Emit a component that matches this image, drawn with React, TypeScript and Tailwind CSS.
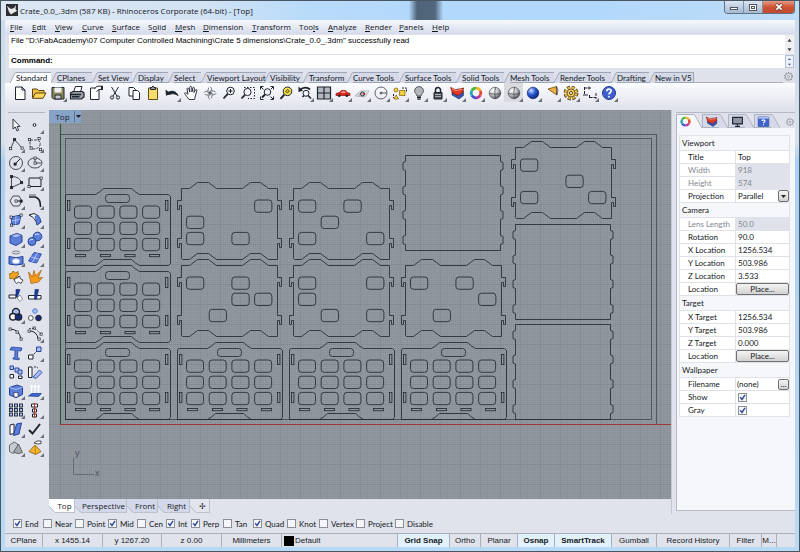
import type { ReactNode } from "react";

const INK = "#1d2430";

type Tool = { name: string; fly?: boolean; active?: boolean; art: ReactNode };

function Icon({ children }: { children: ReactNode }) {
  return (
    <svg viewBox="0 0 16 16" className="h-4 w-4 shrink-0" fill="none" stroke={INK} strokeWidth="1" aria-hidden="true">
      {children}
    </svg>
  );
}

function ToolButton({ tool }: { tool: Tool }) {
  return (
    <button
      type="button"
      aria-label={tool.name}
      className={`relative flex h-[19px] w-[19px] shrink-0 items-center justify-center ${tool.active ? "bg-[#d9dbdf]" : ""}`}
    >
      <Icon>{tool.art}</Icon>
      {tool.fly && (
        <svg viewBox="0 0 4 4" className="absolute right-0 bottom-0 h-1 w-1" aria-hidden="true">
          <path d="M4 0V4H0Z" fill="#6b6f76" />
        </svg>
      )}
    </button>
  );
}

const sphere = (light: string, mid: string, dark: string, id: string) => (
  <>
    <defs>
      <radialGradient id={id} cx="0.35" cy="0.3" r="0.75">
        <stop offset="0" stopColor={light} />
        <stop offset="0.5" stopColor={mid} />
        <stop offset="1" stopColor={dark} />
      </radialGradient>
    </defs>
    <circle cx="8" cy="8" r="5.8" fill={`url(#${id})`} stroke={dark} strokeWidth="0.6" />
  </>
);

const magnifier = (
  <>
    <circle cx="9.5" cy="6" r="3.8" fill="#f4f6fa" />
    <path d="M6.8 8.8L2.5 13.5" strokeWidth="1.8" />
  </>
);

const colorWheel = (
  <g strokeWidth="2.8">
    <path d="M8 3.2A4.8 4.8 0 0 1 12.2 5.6" stroke="#f0b429" />
    <path d="M12.2 5.6A4.8 4.8 0 0 1 12.2 10.4" stroke="#e8452c" />
    <path d="M12.2 10.4A4.8 4.8 0 0 1 8 12.8" stroke="#c0359b" />
    <path d="M8 12.8A4.8 4.8 0 0 1 3.8 10.4" stroke="#3b55cf" />
    <path d="M3.8 10.4A4.8 4.8 0 0 1 3.8 5.6" stroke="#27a5b8" />
    <path d="M3.8 5.6A4.8 4.8 0 0 1 8 3.2" stroke="#4cb542" />
  </g>
);

const layers = (
  <>
    <path d="M3 7V10L10 14L14.5 10.5V6L9 4Z" fill="#3756b4" stroke="#1b2d6b" strokeWidth="0.6" />
    <path d="M1.5 2.5L7 4.8L14.5 3L13.8 7.5L9 10.5L3.5 8Z" fill="#e23b22" stroke="#7b1b10" strokeWidth="0.7" />
    <path d="M3 3.5L7 5.5L13 4.3" stroke="#f79b83" />
  </>
);

const gear = (
  <>
    <circle cx="8" cy="8" r="5.8" strokeWidth="1.6" strokeDasharray="1.6 2.1" />
    <circle cx="8" cy="8" r="4.8" />
    <circle cx="8" cy="8" r="1.6" />
  </>
);

const mainTools: Tool[] = [
  { name: "New", art: <path d="M3.5 2H10L13 5V14.5H3.5ZM10 2V5H13" fill="#fff" /> },
  {
    name: "Open",
    art: (
      <>
        <path d="M1.5 13V4H6L7.5 5.5H13V8" fill="#f3c13c" stroke="#5c4410" />
        <path d="M1.5 13.3L4.5 8H15L12 13.3Z" fill="#ffd65c" stroke="#5c4410" />
      </>
    ),
  },
  {
    name: "Save",
    fly: true,
    art: (
      <>
        <path d="M2 2.5H14V14H3.5L2 12.5Z" fill="#8b8a58" />
        <path d="M4.5 2.5H11.5V7.5H4.5Z" fill="#eef0f2" stroke="none" />
        <path d="M5 10H11V14H5Z" fill="#c9ccd0" />
      </>
    ),
  },
  {
    name: "Print",
    art: (
      <>
        <path d="M4.5 7L6.5 1.5H13L11.5 7" fill="#fff" />
        <path d="M1.5 8L4 6.5H13.5L15 8V12L12.5 14H1.5Z" fill="#9b9da2" strokeWidth="1.2" />
        <path d="M1.5 9.5H12M3 11.8H10.5" strokeWidth="1.4" />
      </>
    ),
  },
  {
    name: "Document properties",
    art: (
      <>
        <path d="M2.5 3H11V14.5H2.5Z" fill="#fff" />
        <path d="M6.5 4L9 1.2H14.5V4.5H11L8.5 6.5" fill="#fff" />
        <path d="M14 1V5" strokeWidth="2" />
      </>
    ),
  },
  { name: "Cut", art: <><path d="M4.5 2L10 11M11.5 2L6 11" /><circle cx="5" cy="12.5" r="1.6" /><circle cx="11" cy="12.5" r="1.6" /></> },
  { name: "Copy", art: <><path d="M3 2.5H7.5L9.5 4.5V11H3Z" fill="#fff" /><path d="M7 5.5H11.5L13.5 7.5V14.5H7Z" fill="#fff" /></> },
  { name: "Paste", art: <><path d="M3.5 3H12.5V14.5H3.5Z" fill="#f7dd6c" stroke="#5d4c13" /><path d="M5.5 4.5V2.5H7L8 1L9 2.5H10.5V4.5Z" fill="#9ea3aa" /></> },
  { name: "Undo", fly: true, art: <><path d="M4 7.5C7 5.5 12 5.5 14 10.5C10.5 8 7.5 8.5 5 9.5Z" fill={INK} /><path d="M1.5 4.5L2 10.8L7 8.8Z" fill={INK} stroke="none" /></> },
  { name: "Pan", art: <path d="M6 14.5C4.5 12.5 2.5 10 1.5 8.3C2.5 7 4 8.2 5 9.3L4 3.6C4.5 2.5 5.6 3 6 4L6.8 7L6.7 2.2C7 1 8.4 1 8.7 2.2L9 7L9.8 2.8C10.5 1.8 11.5 2.4 11.4 3.6L11 7.5L12.5 4.8C13.5 4.2 14.2 5 13.8 6L12.3 11L11.5 14.5Z" fill="#fff" strokeWidth="0.9" /> },
  { name: "Rotate view", art: <g stroke="#6a707a" strokeWidth="0.9"><ellipse cx="8" cy="8" rx="6.3" ry="2.2" strokeDasharray="5 2" /><ellipse cx="8" cy="8" rx="2.2" ry="6.3" strokeDasharray="5 2" /><path d="M8 6V10M6 8H10" stroke={INK} /></g> },
  { name: "Zoom dynamic", art: <>{magnifier}<path d="M9.5 4V8M7.5 6H11.5" /></> },
  { name: "Zoom window", art: <><path d="M4 2.5H14.5V13.5H8" strokeDasharray="1.5 1.5" /><circle cx="7.5" cy="7" r="3.6" fill="#f4f6fa" /><path d="M5 9.8L1.5 13.5" strokeWidth="1.8" /></> },
  { name: "Zoom extents", art: <><circle cx="8.5" cy="7" r="3.3" /><path d="M6 9.5L3 12.5" strokeWidth="1.8" /><path d="M1.5 4.5V1.5H4.5M11.5 1.5H14.5V4.5M14.5 11.5V14.5H11.5M4.5 14.5H1.5V11.5M12 4L14 2M11.5 11.5L14 14M2 2L4.5 4.5" /></> },
  { name: "Zoom selected", art: <><circle cx="9.5" cy="6.3" r="4.3" fill="#f5e04a" /><path d="M7.5 6.5L9.5 4.5L11.5 6L9.5 8Z" fill="#e3b81f" strokeWidth="0.7" /><path d="M6.3 9.6L2.5 13.8" strokeWidth="2" /></> },
  { name: "Undo view", fly: true, art: <><path d="M3 5C6 2 10.5 2 13 4.5" strokeWidth="1.8" /><path d="M1.5 1.5V7L6 5.8Z" fill={INK} stroke="none" /><circle cx="9" cy="8.3" r="3" /><path d="M11 10.5L14 13.5M5.5 12L7 10.5" strokeWidth="1.6" /></> },
  { name: "Four viewports", fly: true, art: <><path d="M1.5 2H14.5V14H1.5Z" fill="#b4b8be" strokeWidth="1.2" /><path d="M8 2V14M1.5 8H14.5" strokeWidth="1.2" /></> },
  { name: "Set view", fly: true, art: <><path d="M1 8.5L4.5 7.5L6.5 5.5H10.5L12 7.5L15 8.5V10.5H1Z" fill="#e22518" stroke="#8c120b" strokeWidth="0.7" /><path d="M7 6.5H10L10.8 7.8H6Z" fill="#f6cdc8" stroke="none" /><circle cx="4.3" cy="10.7" r="1.3" fill={INK} stroke="none" /><circle cx="11.8" cy="10.7" r="1.3" fill={INK} stroke="none" /></> },
  { name: "Set construction plane", fly: true, art: <><path d="M1 11L6 6H15L11 12ZM4 8.5H13M2.5 10H12M8 6L5 11.5M11.5 6L8 12" stroke="#9299a6" strokeWidth="0.6" /><circle cx="8.5" cy="9" r="2" stroke="#333" /><path d="M8.5 9H11" stroke="#d12c22" strokeWidth="1.2" /></> },
  { name: "Object snap", fly: true, art: <g stroke="#5d636d"><circle cx="8" cy="8" r="6" /><path d="M8 8H14" /><circle cx="8" cy="8" r="1" fill="#5d636d" /></g> },
  { name: "Select", fly: true, art: <><g fill="#f7cf3a" stroke="#7d5c10" strokeWidth="0.7"><path d="M7.5 5.5H13V10.5H7.5Z" /><circle cx="4" cy="5" r="2" /><path d="M2 14L4.2 10L6.5 14Z" /></g><path d="M10 3H14.5V7M1.5 9V13" strokeDasharray="2 1" /></> },
  { name: "Hide", fly: true, art: <><path d="M6 11C6 9 3.6 8.5 3.6 5.8A4.4 4.2 0 0 1 12.4 5.8C12.4 8.5 10 9 10 11Z" fill="#b3b6bb" stroke="#55585e" /><path d="M6 12.2H10M6.5 14H9.5" strokeWidth="1.4" /></> },
  { name: "Lock", fly: true, art: <><path d="M5.5 7.5V5A2.5 2.5 0 0 1 10.5 5V7.5" strokeWidth="1.5" /><path d="M4 7.5H12V14H4Z" fill="#4b4e55" /><path d="M5 9.5H11M5 11.5H11" stroke="#a9adb5" /></> },
  { name: "Layers", fly: true, art: layers },
  { name: "Colors", fly: true, art: colorWheel },
  { name: "Shade", art: <>{sphere("#ffffff", "#c3c5c9", "#4a4c51", "sg1")}<path d="M2.2 8.5Q8 10 13.8 8.5M8.5 2.2Q7 8 8.5 13.8" stroke="#3b3d42" strokeWidth="0.7" /></> },
  { name: "Shaded viewport", fly: true, active: true, art: <>{sphere("#ffffff", "#c3c5c9", "#4a4c51", "sg2")}<path d="M2.2 8.5Q8 10 13.8 8.5M8.5 2.2Q7 8 8.5 13.8" stroke="#3b3d42" strokeWidth="0.7" /></> },
  { name: "Render", fly: true, art: sphere("#cfe0ff", "#2654cf", "#0a1f6d", "sg3") },
  { name: "Spotlight", fly: true, art: <><path d="M4 4L12.5 1.5L12.8 10Z" fill="#f0b040" stroke="#6b4a12" strokeWidth="0.8" /><path d="M12.5 1.5L14 5L12.8 10Z" fill="#fff3c8" strokeWidth="0.6" /></> },
  { name: "Options", fly: true, art: <><circle cx="8" cy="8" r="5.8" stroke="#4d3a0e" strokeWidth="3.2" strokeDasharray="3 1.55" /><circle cx="8" cy="8" r="5.4" stroke="#e5b53a" strokeWidth="2.4" strokeDasharray="2.2 2.04" strokeDashoffset="-0.3" /><circle cx="8" cy="8" r="4" fill="#efcb62" stroke="#5e4611" strokeWidth="0.8" /><circle cx="8" cy="8" r="1.5" fill="#fff" stroke="#5e4611" /></> },
  { name: "Dimension", fly: true, art: <><path d="M2.5 2V10M2.5 3H9M7 1.5V4.5M7.5 10V14M14 8V14M7.5 12.5H14" strokeDasharray="3 1" /><path d="M1 10H6" /></> },
  { name: "Help", fly: true, art: <><circle cx="8" cy="8" r="6.5" fill="#3f5fcc" stroke="#233c94" /><path d="M5.8 6.2C5.8 3.4 10.4 3.6 10.2 6C10.1 7.5 8 7.6 8 9.5M8 11V12.6" stroke="#fff" strokeWidth="1.7" /></> },
];

const BLUE = "#5b7fd8";
const PALE = "#a9bff2";
const node = (x: number, y: number, fill = "#fff") => (
  <rect key={`${x}-${y}`} x={x - 1} y={y - 1} width="2.2" height="2.2" fill={fill} strokeWidth="0.7" />
);

const sideTools: Tool[] = [
  { name: "Cancel", art: <path d="M5 2V12L7.3 10L9 14L10.6 13.2L9 9.5H12Z" fill="#fff" strokeWidth="0.9" /> },
  { name: "Point", fly: true, art: <circle cx="7.5" cy="8" r="1.4" fill="#fff" /> },
  { name: "Polyline", fly: true, art: <><path d="M3 12L6.5 3.5L14 12" strokeWidth="0.8" />{node(2.5, 12.5)}{node(6.5, 3.5, INK)}{node(14, 12)}</> },
  { name: "Curve", fly: true, art: <><path d="M3 4H10Q14 5 13 9Q12 13 6 13Q3 12 3 9Z" strokeDasharray="3 1" strokeWidth="0.8" />{[[2.5, 3.5], [12, 2.5], [13.5, 13.5], [4, 12]].map(([x, y]) => node(x, y))}</> },
  { name: "Circle", fly: true, art: <><circle cx="8" cy="8" r="6.5" strokeWidth="0.8" /><path d="M7 9L12 4" />{node(7, 9, INK)}</> },
  { name: "Ellipse", fly: true, art: <><ellipse cx="8" cy="8" rx="7" ry="5" strokeWidth="0.8" /><path d="M8 3V8H14" strokeWidth="0.8" />{node(8, 8)}{node(8, 3)}</> },
  { name: "Arc", fly: true, art: <><path d="M3.5 2.5Q12 2.5 13.5 9L3.5 13.5Z" strokeWidth="0.8" />{node(3.5, 2.5, INK)}{node(13.5, 8.5, INK)}{node(3.5, 13.5, INK)}</> },
  { name: "Rectangle", fly: true, art: <><path d="M2 4H14V12.5H2Z" />{node(2, 12.5)}{node(14, 4)}</> },
  { name: "Polygon", fly: true, art: <><path d="M2 8L5 3H11L14 8L11 13H5Z" strokeWidth="0.8" /><path d="M8 8H13" />{node(8, 8)}{node(13, 8, INK)}</> },
  { name: "Fillet", fly: true, art: <><path d="M2 4H8Q13.5 5 13.5 14" strokeWidth="1.6" /><path d="M2 2H9" strokeWidth="0.7" /></> },
  { name: "Surface from points", fly: true, art: <><path d="M3 5L13 3L11 12L4 13Z" fill={BLUE} stroke="#26429a" /><path d="M8 4L7.5 12.5M3.5 9L12 7.5" stroke="#c8d6fa" strokeWidth="0.7" />{node(3, 5)}{node(13, 3)}{node(3.5, 13)}</> },
  { name: "Sweep", fly: true, art: <><path d="M2 3L7 1.5Q13 4 14 10L10 13Q9 6 2 3Z" fill="#f4f6ff" /><path d="M8 4.5L11 3Q13.5 6 13.8 10L10 13Q9.8 8 8 4.5Z" fill={BLUE} stroke="#3755b5" strokeWidth="0.8" /></> },
  { name: "Box", fly: true, art: <><path d="M2 5L9 2.5L14 4.5V11L8 14.5L2 12Z" fill={BLUE} stroke="#26429a" /><path d="M2 5L8 7L14 4.5L9 2.5Z" fill={PALE} stroke="#26429a" strokeWidth="0.6" /></> },
  { name: "Spheres", fly: true, art: <><circle cx="10.5" cy="5.5" r="4.3" fill={BLUE} stroke="#26429a" /><circle cx="5" cy="10.5" r="4" fill={BLUE} stroke="#26429a" /><path d="M8 4Q10 2 12 3.5M2.5 9.5Q4 7.5 6 8.5" stroke="#dfe8ff" /></> },
  { name: "Surface tools", fly: true, art: <><ellipse cx="8" cy="2.5" rx="4" ry="1.4" stroke="#777d88" /><path d="M1 6.5Q8 9 15 6.5V14Q8 16 1 14Z" fill={BLUE} stroke="#26429a" /><ellipse cx="8" cy="11.2" rx="3.6" ry="2.6" fill="#fff" stroke={PALE} /></> },
  { name: "Patch", fly: true, art: <><path d="M1.5 11L7 2.5L14.5 4L9.5 13Z" fill={BLUE} stroke="#3755b5" /><path d="M4 7L12 9M10.5 3L5.5 12" stroke="#dbe4fc" strokeWidth="0.7" /></> },
  { name: "Puzzle", art: <><path d="M1.5 4.5H4Q4 1.5 6 2.5L7.5 4L10 2.5L10.5 6L8.5 7.5L10 10L6 11L5 9L2 10Z" fill="#f2a21b" stroke="#8b570a" strokeWidth="0.7" /><path d="M7 9H10V7.5H12V9.5L15 11L13 14.5L10.5 13L8.5 14.5L6.5 12Z" fill="#fff" strokeWidth="0.8" /></> },
  { name: "Explode", art: <path d="M1.5 3L5.5 8L7 1.5L8.5 7L14.5 1L11 9L15.5 8.5L11.5 13L4 14.5Z" fill="#f59a17" stroke="#a35b08" strokeWidth="0.7" /> },
  { name: "Trim", art: <><path d="M1 7H8V10H1Z" fill="#fff" /><path d="M8 1.5H12L9.5 9H8Z" fill="#1c3f9e" stroke="#10276b" strokeWidth="0.6" /><path d="M9 10L12 7L14.5 11L12 13.5Z" fill="#fff" stroke="#8b8f97" /></> },
  { name: "Split", art: <><path d="M1.5 7.5H14V11H1.5Z" fill="#fff" /><path d="M8 1.5H11.5L9.5 11H7.5Z" fill="#1c3f9e" stroke="#10276b" strokeWidth="0.6" /></> },
  { name: "Group", fly: true, art: <><circle cx="8" cy="5" r="3.5" fill={PALE} strokeWidth="1.3" /><circle cx="5" cy="9.8" r="3.3" fill="#fff" strokeWidth="1.5" /><circle cx="10.5" cy="10" r="3.2" fill="#1b2a78" strokeWidth="1.3" /></> },
  { name: "Ungroup", art: <><circle cx="8" cy="4" r="2.3" fill={PALE} stroke={BLUE} /><circle cx="3.8" cy="11" r="2.4" fill="#fff" stroke="#555" /><circle cx="11.5" cy="11" r="2.8" fill="#1b2a78" /></> },
  { name: "Edit points", art: <><path d="M2 3Q12 3.5 13 14" />{node(2, 3)}{node(9, 6)}{node(13, 13)}</> },
  { name: "Control points", fly: true, art: <><path d="M1 5Q10 4 11.5 14" />{node(2, 5)}{node(7, 2)}{node(14, 8)}{node(12, 13)}<path d="M2 2.5H8L14 8" strokeDasharray="2 1" strokeWidth="0.7" /></> },
  { name: "Text", art: <path d="M2 5L3.5 2L14 3L13 6L9.8 5.5L9.5 12.5L11.5 13.5L11 14.8L5 14L5.2 12.8L6.8 12.5L7 5.2L4 5Z" fill={BLUE} stroke="#26429a" strokeWidth="0.8" /> },
  { name: "Move", fly: true, art: <><path d="M5 11L10 6" strokeDasharray="2 1" /><path d="M1.5 10H6V14H1.5Z" fill="#fff" /><path d="M9.5 2H14V6.5H9.5Z" fill={PALE} stroke="#26429a" /></> },
  { name: "Copy objects", art: <><g fill={PALE} stroke="#26429a"><path d="M7 4H11V8H7Z" /><path d="M10 6H14V10H10Z" /><path d="M2 2H5.5V5.5H2Z" /></g><path d="M2 10.5H5.5V14H2ZM10.5 12H14V14.5H10.5Z" fill="#fff" /></> },
  { name: "Rotate", art: <><path d="M1.5 3H5V13.5H1.5Z" fill="#fff" /><path d="M6 13L12.5 6L15 8.5L9 14.5Z" fill={PALE} stroke="#3755b5" /><path d="M7 3Q9 2.5 11 4" strokeDasharray="2 1" /></> },
  { name: "Solid edit", fly: true, art: <><path d="M1.5 4.5L9 2L14.5 4V11.5L8 14.5L1.5 12Z" fill={BLUE} stroke="#26429a" /><path d="M1.5 4.5L8 6.5L14.5 4" stroke={PALE} /><path d="M6 9.5H10V14H6Z" fill="#fff" strokeWidth="0.6" /></> },
  { name: "Extrude", fly: true, art: <><path d="M1.5 13L5 10.5H14.5L11.5 13.5Z" fill="#3f68d6" stroke="#1b3488" strokeWidth="0.7" /><path d="M4.5 10V3M8 10V3M11.5 10V3M3 4.5L4.5 2L6 4.5M6.8 4.5L8 2L9.3 4.5M10 4.5L11.5 2L13 4.5" stroke="#fff" /></> },
  { name: "Array", fly: true, art: <g fill={PALE} strokeWidth="0.9">{[2, 6.5, 11].map((y) => [1.5, 6.5, 11.5].map((x) => <rect key={`${x}${y}`} x={x} y={y} width="3" height="3" />))}</g> },
  { name: "Align", fly: true, art: <><path d="M4.5 2H10.5V5H4.5ZM5.5 7H9.5V10H5.5ZM5.5 12H9.5V15H5.5Z" fill="#fff" /><path d="M7.5 1V15.5" stroke="#d8281d" strokeWidth="1" /></> },
  { name: "Shear", fly: true, art: <><path d="M2 4L6 3V12.5L2 13.5Z" fill="#fff" /><path d="M8.5 3L13.5 2L11 13L5.5 14.5Z" fill={BLUE} stroke="#26429a" /></> },
  { name: "Check", fly: true, art: <path d="M2 9L5.5 12.5L13 3" strokeWidth="2" /> },
  { name: "Primitives", fly: true, art: <><path d="M1.5 5L6 2L9.5 4V11L5 13.5L1.5 11.5Z" fill="#c9ccd0" stroke="#4c4f55" strokeWidth="0.8" /><path d="M5.5 12L10.5 4L14.5 12.5Q10 15 5.5 12Z" fill="#a3a6ab" stroke="#4c4f55" strokeWidth="0.8" /></> },
  { name: "Pyramid", fly: true, art: <><path d="M8 5L14 11.5L8.5 14.5L2 11.5Z" fill="#f4b432" stroke="#81590d" strokeWidth="0.8" /><path d="M8 5L8.5 14.5" stroke="#c58512" /><path d="M7 3L10 1H14V3.5L11 4Z" fill="#fff" strokeWidth="0.8" /></> },
];

const menus: [string, string, string, string][] = [
  ["", "F", "ile", "w-[22px]"],
  ["", "E", "dit", "w-[23px]"],
  ["", "V", "iew", "w-[27px]"],
  ["", "C", "urve", "w-[30px]"],
  ["", "S", "urface", "w-[36px]"],
  ["S", "o", "lid", "w-[27px]"],
  ["", "M", "esh", "w-[28px]"],
  ["", "D", "imension", "w-[49px]"],
  ["", "T", "ransform", "w-[47px]"],
  ["Too", "l", "s", "w-[29px]"],
  ["", "A", "nalyze", "w-[37px]"],
  ["", "R", "ender", "w-[34px]"],
  ["", "P", "anels", "w-[33px]"],
  ["", "H", "elp", "w-[24px]"],
];

const toolTabs: [string, string][] = [
  ["Standard", "w-[41px]"],
  ["CPlanes", "w-[41px]"],
  ["Set View", "w-[40px]"],
  ["Display", "w-[36px]"],
  ["Select", "w-[33px]"],
  ["Viewport Layout", "w-[63px]"],
  ["Visibility", "w-[39px]"],
  ["Transform", "w-[44px]"],
  ["Curve Tools", "w-[52px]"],
  ["Surface Tools", "w-[57px]"],
  ["Solid Tools", "w-[48px]"],
  ["Mesh Tools", "w-[50px]"],
  ["Render Tools", "w-[57px]"],
  ["Drafting", "w-[38px]"],
  ["New in V5", "w-[45px]"],
];

function TitleBar() {
  return (
    <header className="flex h-[19px] shrink-0 items-start bg-[linear-gradient(90deg,#dce7f3_0px,#d3e3f4_200px,#b9dbfa_300px,#b2d8fb_408px,#4f6478_416px,#52677b_434px,#b2d8fb_442px,#b2d8fb_600px,#bddcf6_100%)] pl-[5px]">
      <svg viewBox="0 0 12 12" className="mt-[3px] h-3 w-3" aria-hidden="true">
        <rect width="12" height="12" fill="#2b2d31" />
        <path d="M1 2L5 5L8 4L10 1L9.5 5L11 7L8 8.5L5 10.5L3 8Z" fill="#e6e8ea" />
      </svg>
      <h1 className="ml-[2px] pt-1 font-['Open_Sans',sans-serif] text-[8px] leading-[11px] whitespace-nowrap text-[#14181d]">
        Crate_0.0_.3dm (587 KB) - Rhinoceros Corporate (64-bit) - [Top]
      </h1>
      <div className="mr-1 ml-auto flex h-[13px] overflow-hidden rounded-b border border-t-0 border-[#5f7286]">
        <button type="button" aria-label="Minimize" className="flex w-[19px] items-end justify-center border-r border-[#7f93a8] bg-linear-to-b from-[#d9e5f1] to-[#a6b9cf] pb-[3px]">
          <span className="h-[3px] w-2 border border-[#4d5661] bg-white" />
        </button>
        <button type="button" aria-label="Maximize" className="flex w-[19px] items-center justify-center border-r border-[#7f93a8] bg-linear-to-b from-[#d9e5f1] to-[#a6b9cf]">
          <span className="flex h-[7px] w-2 items-center justify-center border border-[#4d5661] bg-white">
            <span className="h-[3px] w-1 border border-[#4d5661]" />
          </span>
        </button>
        <button type="button" aria-label="Close" className="flex w-[31px] items-center justify-center bg-linear-to-b from-[#e59a86] via-[#cf5233] to-[#c24a2c]">
          <svg viewBox="0 0 8 8" className="h-2 w-2" aria-hidden="true">
            <path d="M1 1L7 7M7 1L1 7" stroke="#5e3930" strokeWidth="3" />
            <path d="M1.3 1.3L6.7 6.7M6.7 1.3L1.3 6.7" stroke="#fff" strokeWidth="1.8" />
          </svg>
        </button>
      </div>
    </header>
  );
}

function Arrows({ color }: { color: string }) {
  return (
    <svg viewBox="0 0 9 18" className="h-full w-full" preserveAspectRatio="none" aria-hidden="true">
      <path d="M2.5 6.5L4.5 3.5L6.5 6.5Z M2.5 12.5L4.5 15.5L6.5 12.5Z" fill={color} />
    </svg>
  );
}

function CommandArea() {
  return (
    <section className="shrink-0 bg-[#dfe2ea] pt-px pr-px pl-1 text-[8px] text-black">
      <div className="flex h-[19px] bg-white">
        <p className="flex-1 truncate pt-px pl-[2px] leading-[10px]">
          File "D:\FabAcademy\07 Computer Controlled Machining\Crate 5 dimensions\Crate_0.0_.3dm" successfully read
        </p>
        <button type="button" aria-label="Scroll history" className="w-[9px] bg-[#f0f0f2]">
          <Arrows color="#3d4149" />
        </button>
      </div>
      <div className="mt-px flex h-[13px] bg-white">
        <label htmlFor="command" className="pl-[2px] leading-[11px] font-bold">Command:</label>
        <input id="command" className="min-w-0 flex-1 outline-none" />
        <button type="button" aria-label="Recent commands" className="w-[9px] border border-[#b6bed2] bg-[#eef1f9]">
          <Arrows color="#3a55b0" />
        </button>
      </div>
    </section>
  );
}

function TabSlant({ fill }: { fill: string }) {
  return (
    <svg viewBox="0 0 6 11" className="h-[11px] w-[6px] shrink-0" aria-hidden="true">
      <path d="M0 11L5 1Q5.5 0.5 6 0.5V11Z" fill={fill} />
      <path d="M0 11L5 1Q5.5 0.5 6 0.5" fill="none" stroke="#9ea5b4" strokeWidth="0.9" />
    </svg>
  );
}

function ToolTabs() {
  return (
    <nav className="flex h-[15px] shrink-0 items-end bg-[#dfe2ea] pl-[5px]">
      {toolTabs.map(([label, width], i) => (
        <button key={label} type="button" className={`flex h-[11px] shrink-0 ${width}`}>
          <TabSlant fill={i === 0 ? "#fbfcfe" : "#d5d9e8"} />
          <span
            className={`flex h-[11px] flex-1 items-center border-t border-[#9ea5b4] font-['Lato','Liberation_Sans',sans-serif] text-[8px] leading-[10px] whitespace-nowrap text-[#14181d] ${
              i === 0 ? "bg-[#fbfcfe]" : "border-b bg-[#d5d9e8]"
            } ${i === toolTabs.length - 1 ? "border-r" : ""}`}
          >
            {label}
          </span>
        </button>
      ))}
      <span className="h-px flex-1 bg-[#a9afbd]" />
      <button type="button" aria-label="Toolbar options" className="mr-px mb-px flex h-[11px] w-[11px]">
        <svg viewBox="0 0 16 16" fill="none" stroke="#8a8f98" strokeWidth="1" aria-hidden="true">{gear}</svg>
      </button>
    </nav>
  );
}

const HOOK_TOPS = [18, 56];

function FacePanel({ x, y, last }: { x: number; y: number; last?: boolean }) {
  return (
    <g transform={`translate(${x} ${y})`}>
      <path d="M2 6H30Q34 4 38 0H66Q70 4 74 6H103L105 8V75L103 77H74Q70 75 66 71H38Q34 75 30 77H0V8Q0 6 2 6Z" />
      {last && <path d="M0 77H105" />}
      <rect x="40" y="6" width="24" height="8" rx="3" />
      {[0, 1, 2].map((r) => [0, 1, 2, 3].map((c) => <rect key={`${r}${c}`} x={9 + c * 22.7} y={17.5 + r * 16.2} width="17" height="12.3" rx="3" />))}
      {[2, 100].map((sx) => [12, 50].map((sy) => <rect key={`${sx}${sy}`} x={sx} y={sy} width="2.4" height="10" />))}
      {[10, 35, 59.5, 84].map((sx) => <rect key={sx} x={sx} y="66" width="10" height="2.2" />)}
    </g>
  );
}

function SidePlate({ x, y, holes }: { x: number; y: number; holes: [number, number][] }) {
  const left = [...HOOK_TOPS].reverse().map((t) => `V${t + 5}H-2V${t + 9}H-4V${t}H0`).join("");
  const right = HOOK_TOPS.map((t) => `V${t}H100V${t + 9}H98V${t + 5}H96`).join("");
  return (
    <g transform={`translate(${x} ${y})`}>
      <path d={`M0 6H8L16 0H27L35 6H61L69 0H79L87 6H96${right}V77H87L79 71H69L61 77H35L27 71H16L8 77H1L0 76${left}Z`} />
      {holes.map(([c, r]) => <rect key={`${c}${r}`} x={5 + c * 22.7} y={17.5 + r * 16.2} width="17.3" height="12.3" rx="3" />)}
    </g>
  );
}

function BasePlate({ x, y }: { x: number; y: number }) {
  const tabs = [6, 30.5, 55, 80];
  const right = tabs.map((t) => `V${t}L97.5 ${t + 1}V${t + 8}L95 ${t + 9}`).join("");
  const left = [...tabs].reverse().map((t) => `V${t + 9}L-2.5 ${t + 8}V${t + 1}L0 ${t}`).join("");
  return <path transform={`translate(${x} ${y})`} d={`M0 0H95${right}V95H0${left}Z`} />;
}

function Viewport() {
  return (
    <div className="relative min-h-0 flex-1 overflow-hidden bg-[#969ca3]">
      <svg className="block h-full w-full" aria-label="Top view of the crate parts" role="img">
        <defs>
          <pattern id="minor" width="2" height="2" patternUnits="userSpaceOnUse">
            <path d="M0.5 0V2M0 0.5H2" stroke="#7e858d" strokeWidth="1" opacity="0.45" />
          </pattern>
          <pattern id="major" width="20" height="20" patternUnits="userSpaceOnUse" x="11" y="14">
            <path d="M0.5 0V20M0 0.5H20" stroke="#6f767e" strokeWidth="1" opacity="0.25" />
          </pattern>
        </defs>
        <rect width="100%" height="100%" fill="url(#minor)" />
        <rect width="100%" height="100%" fill="url(#major)" />
        <g transform="translate(-49 -110)" fill="none" stroke="#2b3035" strokeWidth="0.9">
          <g stroke="#4c5258">
            <rect x="60.5" y="134.5" width="596" height="290" />
            <rect x="65.5" y="138.5" width="586" height="281" />
          </g>
          <path d="M60.5 124V424" stroke="#1c5c2a" strokeWidth="1" />
          <path d="M60 424.5H2000" stroke="#a03431" strokeWidth="1" />
          <FacePanel x={65.5} y={188.5} />
          <FacePanel x={65.5} y={265.5} />
          {[65.5, 177.5, 289.5, 401.5].map((x) => <FacePanel key={x} x={x} y={342.5} last />)}
          <SidePlate x={181.5} y={182.5} holes={[[3, 0], [0, 1], [0, 2], [2, 2]]} />
          <SidePlate x={293.5} y={182.5} holes={[[0, 0], [2, 0], [1, 1], [0, 2], [3, 2]]} />
          <SidePlate x={181.5} y={259.5} holes={[[0, 0], [2, 0], [2, 1], [3, 1], [1, 2]]} />
          <SidePlate x={293.5} y={259.5} holes={[[0, 0], [3, 0], [0, 1], [1, 2], [3, 2]]} />
          <SidePlate x={405.5} y={259.5} holes={[[0, 0], [2, 0], [3, 1], [1, 2]]} />
          <SidePlate x={515.5} y={141.5} holes={[[0, 0], [2, 1], [0, 2], [3, 2]]} />
          <BasePlate x={405.5} y={155.5} />
          <BasePlate x={515.5} y={224.5} />
          <BasePlate x={515.5} y={324.5} />
          <path d="M73.5 458V474.5H94" stroke="#5d646b" />
          <g fill="#4f565d" stroke="none" fontFamily="Liberation Sans, sans-serif" fontSize="9">
            <text x="75" y="456">y</text>
            <text x="95" y="476">x</text>
          </g>
        </g>
      </svg>
      <button type="button" className="absolute top-0 left-0 flex h-[13px] w-[32px] items-center bg-[#86a3c6] font-['Open_Sans',sans-serif] text-[8px] leading-[12px] text-[#14202e]">
        <span className="flex-1 pl-[2px] text-center">Top</span>
        <span className="flex h-[11px] w-[7px] items-center justify-center border-l border-[#5f7690]">
          <svg viewBox="0 0 5 3" className="h-[3px] w-[5px]" aria-hidden="true"><path d="M0 0H5L2.5 3Z" fill="#14202e" /></svg>
        </span>
      </button>
    </div>
  );
}

const viewTabs: [string, string][] = [
  ["Top", "w-[26px]"],
  ["Perspective", "w-[52px]"],
  ["Front", "w-[31px]"],
  ["Right", "w-[32px]"],
  ["✢", "w-[20px]"],
];

function ViewTabs() {
  return (
    <nav className="flex h-[15px] shrink-0 items-start">
      {viewTabs.map(([label, width], i) => (
        <button key={label} type="button" aria-label={label === "✢" ? "New viewport" : label} className={`flex h-[14px] ${width}`}>
          <svg viewBox="0 0 6 14" className="h-[14px] w-[6px] shrink-0" aria-hidden="true">
            <path d="M0 0V7L6 14V0Z" fill={i === 0 ? "#fff" : i === 4 ? "#e2e5ee" : "#d3d7ea"} />
            <path d="M0 7L6 13.5" stroke="#b3b8c6" fill="none" />
          </svg>
          <span
            className={`h-[14px] flex-1 border-r border-b border-[#bcc1ce] font-['Open_Sans',sans-serif] text-[8px] leading-[14px] whitespace-nowrap text-[#161b26] ${
              i === 0 ? "bg-white" : i === 4 ? "bg-[#e2e5ee]" : "bg-[#d3d7ea]"
            }`}
          >
            {label}
          </span>
        </button>
      ))}
    </nav>
  );
}

type Prop = { label: string; value?: string; kind?: "off" | "select" | "place" | "file" | "check" };

const groups: { title: string; rows: Prop[] }[] = [
  {
    title: "Viewport",
    rows: [
      { label: "Title", value: "Top" },
      { label: "Width", value: "918", kind: "off" },
      { label: "Height", value: "574", kind: "off" },
      { label: "Projection", value: "Parallel", kind: "select" },
    ],
  },
  {
    title: "Camera",
    rows: [
      { label: "Lens Length", value: "50.0", kind: "off" },
      { label: "Rotation", value: "90.0" },
      { label: "X Location", value: "1256.534" },
      { label: "Y Location", value: "503.986" },
      { label: "Z Location", value: "3.533" },
      { label: "Location", kind: "place" },
    ],
  },
  {
    title: "Target",
    rows: [
      { label: "X Target", value: "1256.534" },
      { label: "Y Target", value: "503.986" },
      { label: "Z Target", value: "0.000" },
      { label: "Location", kind: "place" },
    ],
  },
  {
    title: "Wallpaper",
    rows: [
      { label: "Filename", value: "(none)", kind: "file" },
      { label: "Show", kind: "check" },
      { label: "Gray", kind: "check" },
    ],
  },
];

function CheckBox({ id, checked }: { id: string; checked?: boolean }) {
  return (
    <span className="relative flex h-[9px] w-[9px] shrink-0">
      <input id={id} type="checkbox" defaultChecked={checked} className="peer h-[9px] w-[9px] appearance-none border border-[#8b8f97] bg-[#f5f6f8]" />
      <svg viewBox="0 0 9 9" className="pointer-events-none absolute inset-0 hidden h-[9px] w-[9px] peer-checked:block" aria-hidden="true">
        <path d="M2.2 4.3L4 6.5L7 1.8" fill="none" stroke="#30489c" strokeWidth="1.4" />
      </svg>
    </span>
  );
}

const buttonLook = "rounded-[2px] border border-[#707070] bg-linear-to-b from-[#f4f4f4] to-[#d2d2d2]";

function PropValue({ row, id }: { row: Prop; id: string }) {
  if (row.kind === "place")
    return <button id={id} type="button" className={`block h-3 w-full text-center leading-[9px] ${buttonLook}`}>Place...</button>;
  if (row.kind === "check") return <span className="flex pl-[2px]"><CheckBox id={id} checked /></span>;
  if (row.kind === "select")
    return (
      <span className="relative flex">
        <select id={id} className="h-3 w-full appearance-none pl-[2px] leading-3">
          <option>{row.value}</option>
        </select>
        <span className={`pointer-events-none absolute top-0 right-0 flex h-3 w-[11px] items-center justify-center ${buttonLook}`}>
          <svg viewBox="0 0 5 3" className="h-[3px] w-[5px]" aria-hidden="true"><path d="M0 0H5L2.5 3Z" fill="#222" /></svg>
        </span>
      </span>
    );
  if (row.kind === "file")
    return (
      <span className="flex items-center pl-px">
        <span className="flex-1">{row.value}</span>
        <button id={id} type="button" className={`h-[11px] w-[11px] leading-[7px] ${buttonLook}`}>...</button>
      </span>
    );
  return <input id={id} defaultValue={row.value} disabled={row.kind === "off"} className="block h-3 w-full pl-[2px] leading-3 outline-none" />;
}

const panelTabs: { name: string; art: ReactNode }[] = [
  { name: "Properties", art: colorWheel },
  { name: "Layers", art: layers },
  { name: "Display", art: <><path d="M2 3H14V11H2Z" fill="#9095a0" strokeWidth="1.4" /><path d="M8 11V13M5 14H11" strokeWidth="1.6" /></> },
  { name: "Help", art: <><path d="M1.5 2.5H14.5V14H1.5Z" fill="#3f62cf" stroke="#3551a9" /><path d="M1.5 3.5H14.5" stroke="#b8c7ef" strokeWidth="2" /><path d="M6 7.5C6 5.5 10 5.5 9.8 7.5C9.7 8.7 8 8.6 8 10.2M8 11.3V12.7" stroke="#fff" strokeWidth="1.4" /></> },
];

function PropertiesPanel() {
  return (
    <aside className="flex w-[119px] shrink-0 flex-col pt-[2px] pb-[3px]">
      <div className="flex h-4 shrink-0 items-end border-t border-[#b5bac6]">
        {panelTabs.map((tab, i) => (
          <button key={tab.name} type="button" aria-label={tab.name} className="flex h-[14px] w-[26px]">
            <span className={`flex h-full w-[17px] items-center justify-center border-t border-l border-[#aeb4c2] ${i === 0 ? "bg-[#f6f7fa]" : "border-b bg-[#d5d9e8]"}`}>
              <svg viewBox="0 0 16 16" className="h-[13px] w-[13px] shrink-0" fill="none" stroke={INK} aria-hidden="true">{tab.art}</svg>
            </span>
            <svg viewBox="0 0 9 14" className="h-[14px] w-[9px]" aria-hidden="true">
              <path d="M0 0.5Q1 0.5 2 1.5L9 14H0Z" fill={i === 0 ? "#f6f7fa" : "#d5d9e8"} />
              <path d="M0 0.5Q1 0.5 2 1.5L9 14" fill="none" stroke="#aeb4c2" />
            </svg>
          </button>
        ))}
        <button type="button" aria-label="Panel options" className="ml-auto flex h-[12px] w-[10px] items-center">
          <svg viewBox="0 0 16 16" fill="none" stroke="#8a8f98" strokeWidth="1" aria-hidden="true">{gear}</svg>
        </button>
      </div>
      <div className="flex-1 border-b border-l border-[#b5bac6] bg-[#f6f7fa] pt-[7px] pr-[5px] pl-[2px] font-['Lato','Liberation_Sans',sans-serif] text-[8px] leading-3 text-[#14181d]">
        <table className="w-full table-fixed border-collapse border border-[#e0e2e9]">
          <colgroup>
            <col className="w-[56px]" />
            <col />
          </colgroup>
          {groups.map((group) => (
            <tbody key={group.title}>
              <tr className="h-[15px] border-b border-[#e0e2e9]">
                <th colSpan={2} className="p-0 pl-[2px] text-left font-normal">{group.title}</th>
              </tr>
              {group.rows.map((row) => {
                const id = `${group.title}-${row.label}`;
                const off = row.kind === "off";
                return (
                  <tr key={row.label} className={`h-[13px] border-b border-[#e0e2e9] ${off ? "text-[#83878f]" : ""}`}>
                    <td className="border-r border-[#e0e2e9] bg-white p-0 pl-2">
                      <label htmlFor={id} className="block h-3 whitespace-nowrap">{row.label}</label>
                    </td>
                    <td className={`p-0 ${off ? "bg-[#dfe2ea]" : "bg-white"}`}>
                      <PropValue row={row} id={id} />
                    </td>
                  </tr>
                );
              })}
            </tbody>
          ))}
        </table>
      </div>
    </aside>
  );
}

const snaps: { label: string; width: string; on?: boolean }[] = [
  { label: "End", width: "w-[30px]", on: true },
  { label: "Near", width: "w-[32px]" },
  { label: "Point", width: "w-[33px]" },
  { label: "Mid", width: "w-[29px]", on: true },
  { label: "Cen", width: "w-[29px]" },
  { label: "Int", width: "w-[25px]", on: true },
  { label: "Perp", width: "w-[32px]", on: true },
  { label: "Tan", width: "w-[30px]" },
  { label: "Quad", width: "w-[34px]", on: true },
  { label: "Knot", width: "w-[32px]" },
  { label: "Vertex", width: "w-[37px]" },
  { label: "Project", width: "w-[39px]" },
  { label: "Disable", width: "w-[40px]" },
];

function OsnapBar() {
  return (
    <form className="flex h-[19px] shrink-0 items-center pl-2 font-['Lato','Liberation_Sans',sans-serif] text-[8px] leading-[10px] text-[#14181d]">
      {snaps.map((snap) => (
        <span key={snap.label} className={`flex shrink-0 items-center gap-[3px] ${snap.width}`}>
          <CheckBox id={`snap-${snap.label}`} checked={snap.on} />
          <label htmlFor={`snap-${snap.label}`}>{snap.label}</label>
        </span>
      ))}
    </form>
  );
}

const toggles: { label: string; width: string; on?: boolean }[] = [
  { label: "Grid Snap", width: "w-[52px]", on: true },
  { label: "Ortho", width: "w-[31px]" },
  { label: "Planar", width: "w-[37px]" },
  { label: "Osnap", width: "w-[37px]", on: true },
  { label: "SmartTrack", width: "w-[57px]", on: true },
  { label: "Gumball", width: "w-[45px]" },
  { label: "Record History", width: "w-[73px]" },
  { label: "Filter", width: "w-[32px]" },
  { label: "M...", width: "w-[15px]" },
];

function StatusBar() {
  const cell = "flex h-full shrink-0 items-center justify-center border-r border-[#a9afbc]";
  return (
    <footer className="flex h-[14px] shrink-0 border-t border-[#a9afbc] text-[8px] leading-[10px] whitespace-nowrap text-[#14181d]">
      <button type="button" className={`${cell} w-[38px]`}>CPlane</button>
      <span className={`${cell} w-[60px]`}>x 1455.14</span>
      <span className={`${cell} w-[59px]`}>y 1267.20</span>
      <span className={`${cell} w-[60px]`}>z 0.00</span>
      <button type="button" className={`${cell} w-[60px]`}>Millimeters</button>
      <button type="button" className="flex h-full min-w-0 flex-1 items-center gap-px border-r border-[#a9afbc] pl-[2px]">
        <span className="h-[10px] w-[10px] bg-black" />
        Default
      </button>
      {toggles.map((t) => (
        <button key={t.label} type="button" className={`${cell} ${t.width} ${t.on ? "bg-[#e3f1fb] font-bold" : ""}`}>{t.label}</button>
      ))}
      <span className="w-[18px] shrink-0" />
    </footer>
  );
}

export default function App() {
  return (
    <div className="flex h-screen flex-col overflow-hidden border border-[#4a5562] bg-[linear-gradient(180deg,#c9daea_0px,#d6e2ee_140px,#a9d0f3_160px,#b8daf6_100%)] font-['Liberation_Sans',Arial,sans-serif]">
      <TitleBar />
      <div className="mx-1 mb-1 flex min-h-0 flex-1 flex-col bg-[#e0e3eb]">
        <nav className="flex h-[14px] shrink-0 items-center bg-linear-to-b from-[#f6f8fc] to-[#d5dbec] pl-[5px] font-['Open_Sans',sans-serif] text-[8px] leading-[12px] text-[#111519]">
          {menus.map(([before, key, after, width]) => (
            <button key={before + key + after} type="button" className={`shrink-0 text-left ${width}`}>
              {before}<u>{key}</u>{after}
            </button>
          ))}
        </nav>
        <CommandArea />
        <ToolTabs />
        <div className="flex h-[27px] shrink-0 items-start bg-linear-to-b from-[#fbfcfe] to-[#dfe2ea] pl-[5px]">
          {mainTools.map((tool) => <ToolButton key={tool.name} tool={tool} />)}
        </div>
        <div className="flex min-h-0 flex-1">
          <div className="flex w-[44px] shrink-0 flex-col pt-[2px]">
            <span className="mr-1 ml-[3px] h-px shrink-0 bg-[#b1b6c2]" />
            <div className="grid grid-cols-[19px_19px] pt-[2px] pl-px">
              {sideTools.map((tool) => <ToolButton key={tool.name} tool={tool} />)}
            </div>
          </div>
          <div className="flex min-w-0 flex-1 flex-col">
            <Viewport />
            <ViewTabs />
          </div>
          <div className="mr-px w-[4px] shrink-0 border-l border-[#c3c7d2]" />
          <PropertiesPanel />
        </div>
        <OsnapBar />
        <StatusBar />
      </div>
    </div>
  );
}
